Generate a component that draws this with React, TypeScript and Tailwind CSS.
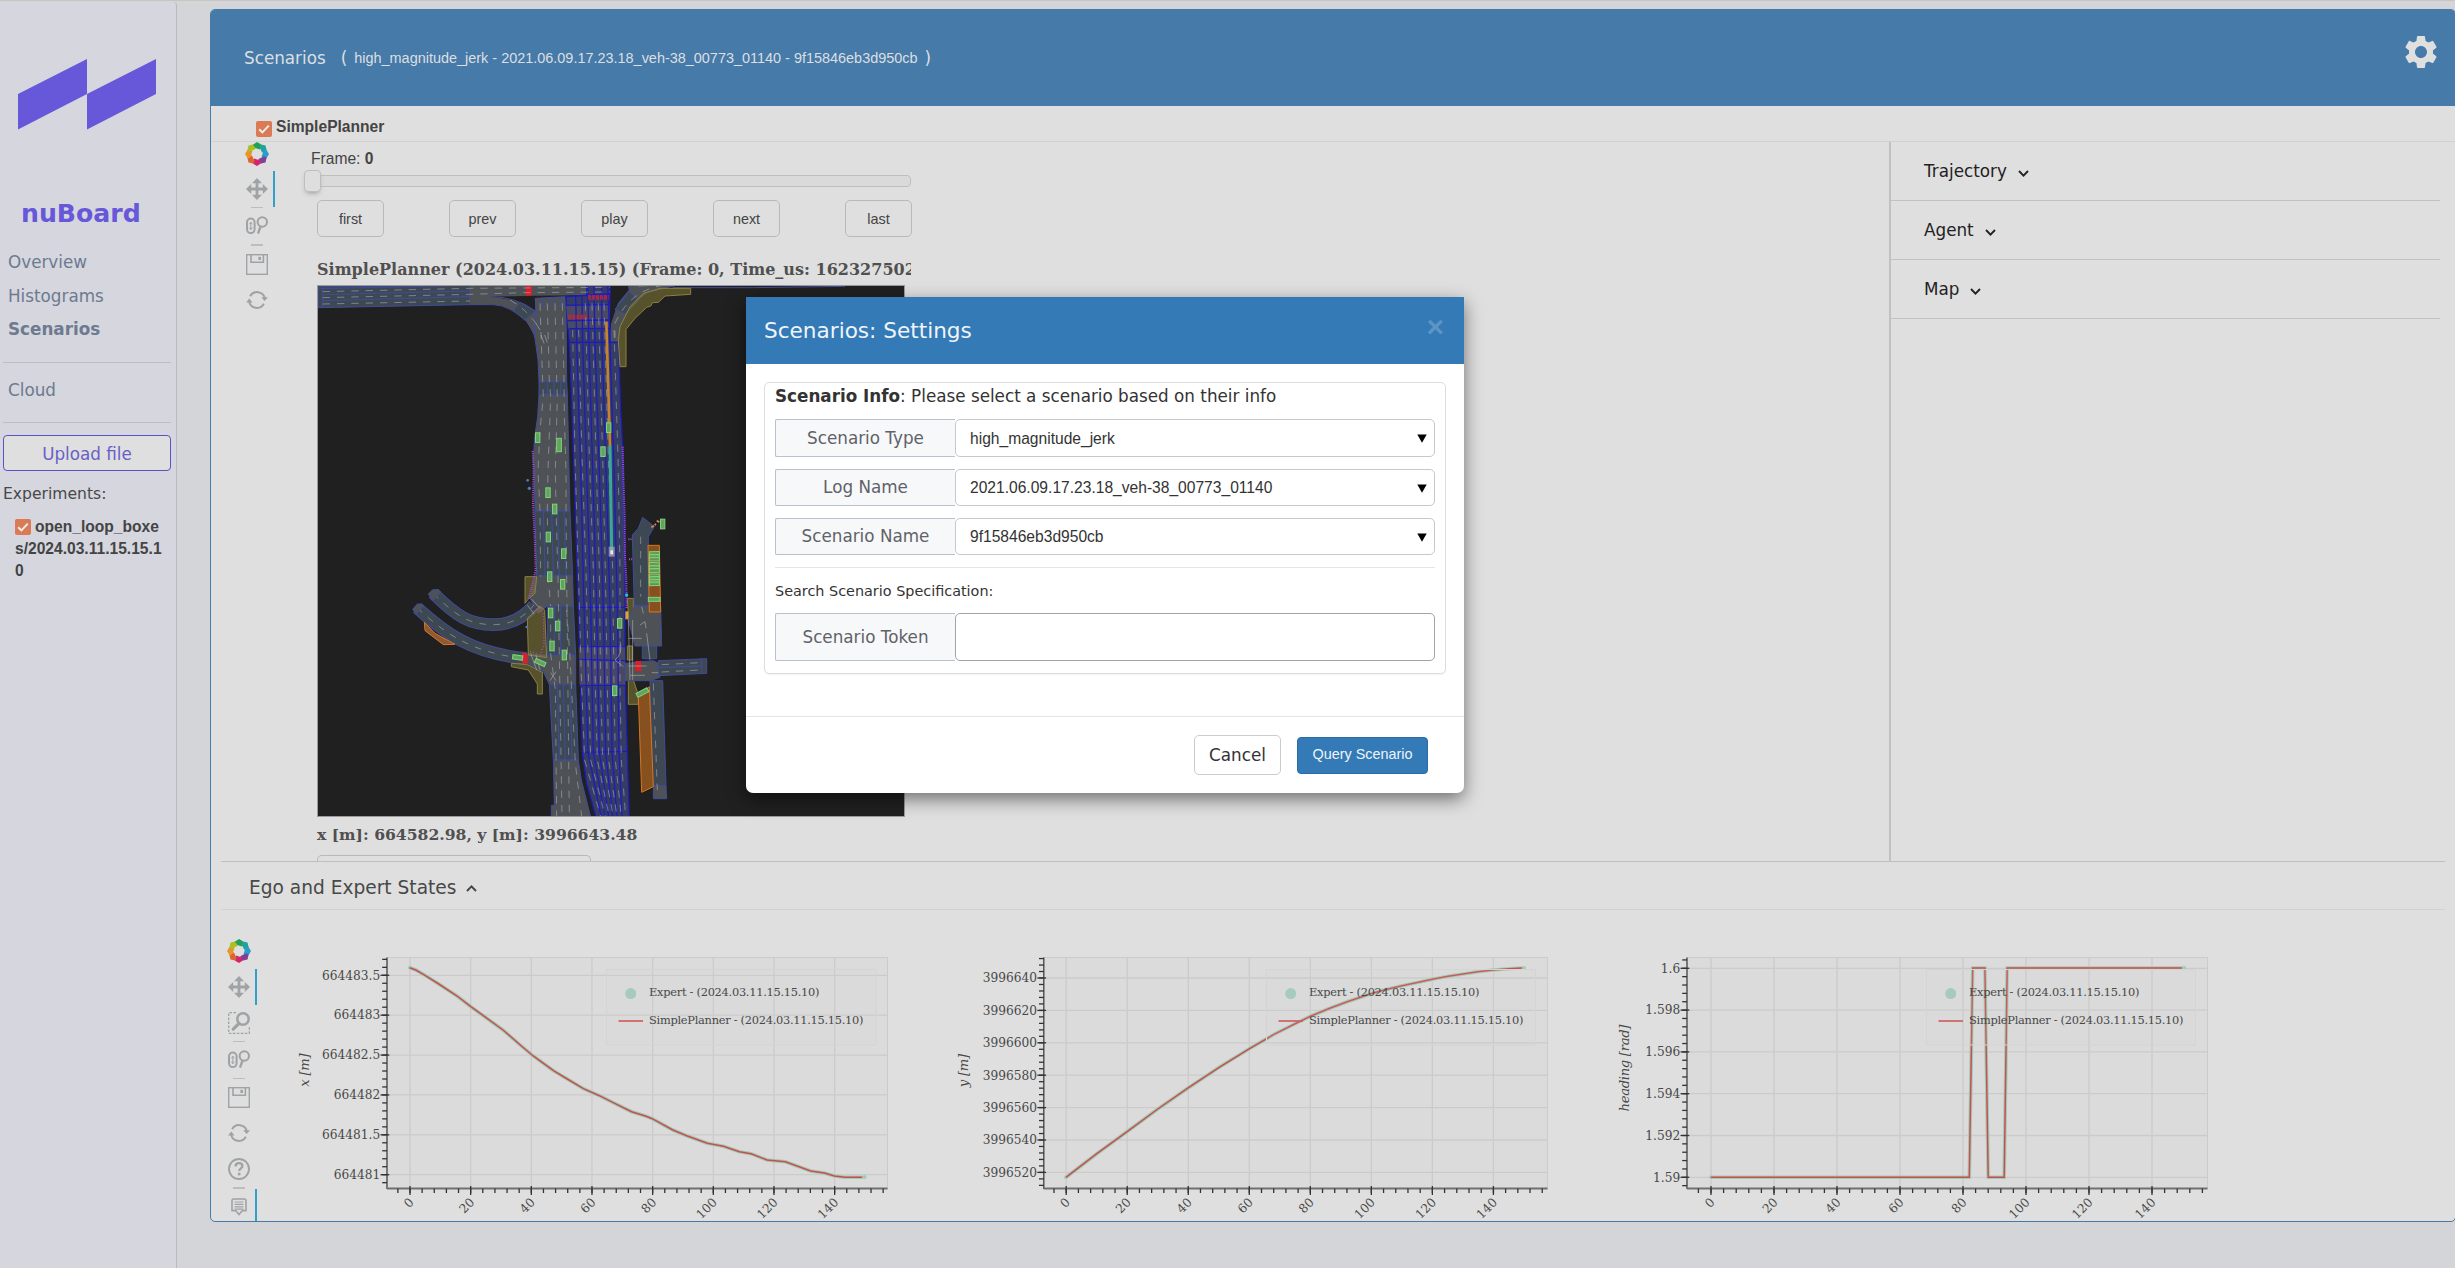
import type { ReactNode } from "react";
import { MdSettings } from "react-icons/md";

const SANS = "font-['DejaVu_Sans',sans-serif]";
const ARIAL = "font-['Liberation_Sans',Arial,sans-serif]";
const SERIF = "font-['DejaVu_Serif',serif]";

/* ---------- Toolbar icons ---------- */

const G = "#9fa3a5";
const LOGO_COLORS = ["#23a055", "#22a29a", "#2b9ccb", "#7d4195", "#d4246f", "#dc6432", "#e8962c", "#a9bf22"];

function polar(deg: number, r: number) {
  const a = ((deg - 90) * Math.PI) / 180;
  return `${(12 + r * Math.cos(a)).toFixed(2)},${(12 + r * Math.sin(a)).toFixed(2)}`;
}

function BokehLogo() {
  return (
    <svg width="24" height="24" viewBox="0 0 24 24">
      {LOGO_COLORS.map((c, i) => {
        const a = i * 45;
        return (
          <polygon
            key={c}
            fill={c}
            points={[polar(a - 27, 10.2), polar(a, 12), polar(a + 22, 10.4), polar(a + 32, 5.4), polar(a - 8, 5.8), polar(a - 24, 7)].join(" ")}
          />
        );
      })}
    </svg>
  );
}

function PanIcon() {
  return (
    <svg width="22" height="22" viewBox="0 0 22 22" fill={G}>
      <path d="M11 0l5 5.2h-3.6v4.4h4.4V6L22 11l-5.2 5v-3.6h-4.4v4.4H16L11 22l-5-5.2h3.6v-4.4H5.2V16L0 11l5.2-5v3.6h4.4V5.2H6z" />
    </svg>
  );
}

function BoxZoomIcon() {
  return (
    <svg width="22" height="22" viewBox="0 0 22 22" fill="none" stroke={G}>
      <path d="M8 .7H.7v20.6h20.6V15" strokeWidth="1.3" strokeDasharray="2.6 1.4" />
      <circle cx="15" cy="7" r="5.7" strokeWidth="2.5" />
      <path d="M11 11.5L5.2 17.2" strokeWidth="3.2" strokeLinecap="round" />
    </svg>
  );
}

function WheelZoomIcon() {
  return (
    <svg width="22" height="20" viewBox="0 0 22 20" fill="none" stroke={G}>
      <rect x="1" y="2.5" width="7.6" height="14.6" rx="3.8" strokeWidth="2" />
      <path d="M4.8 6v8" strokeWidth="1" />
      <path d="M3.2 8.2l1.6-1.8 1.6 1.8M3.2 11.6l1.6 1.8 1.6-1.8" strokeWidth="1" />
      <circle cx="16.3" cy="6" r="4.7" strokeWidth="2" />
      <path d="M14.6 10.4L12 17.6" strokeWidth="2.4" />
    </svg>
  );
}

function SaveIcon() {
  return (
    <svg width="22" height="21" viewBox="0 0 22 21" fill="none" stroke={G}>
      <rect x=".7" y=".7" width="20.6" height="19.6" strokeWidth="1.4" />
      <path d="M5 1v7.2h12.4V1" strokeWidth="1.6" />
      <rect x="12.4" y="2.8" width="2.6" height="3.2" fill={G} stroke="none" />
    </svg>
  );
}

function ResetIcon() {
  return (
    <svg width="22" height="18" viewBox="0 0 22 18" fill="none" stroke={G}>
      <path d="M4.1 5.2A8 8 0 0 1 18.8 7" strokeWidth="2" />
      <path d="M17.9 12.8A8 8 0 0 1 3.2 11" strokeWidth="2" />
      <path d="M15.2 6.2h6.8l-3.4 3.8zM0 11.6h6.6L3.2 7.6z" fill={G} stroke="none" />
    </svg>
  );
}

function HelpIcon() {
  return (
    <svg width="22" height="22" viewBox="0 0 22 22" fill="none" stroke={G}>
      <circle cx="11" cy="11" r="10" strokeWidth="1.9" />
      <path d="M7.6 8.4c0-2 1.5-3.2 3.4-3.2s3.4 1.1 3.4 2.9c0 2.3-3.2 2.3-3.2 5" strokeWidth="2.3" />
      <circle cx="11.2" cy="15.9" r="1.5" fill={G} stroke="none" />
    </svg>
  );
}

function HoverIcon() {
  return (
    <svg width="16" height="18" viewBox="0 0 16 18" fill="none" stroke={G}>
      <path d="M1 2.6Q1 1 2.6 1h10.8Q15 1 15 2.6v10h-3.6L8 16.6l-3.4-4H1z" strokeWidth="1.6" />
      <path d="M3.6 4h8.8M3.6 6.4h8.8M3.6 8.8h8.8M3.6 11.2h8.8" strokeWidth="1.2" />
    </svg>
  );
}

function Tool({ children, active = false }: { children: ReactNode; active?: boolean }) {
  return (
    <div className={`flex h-9 w-[36px] shrink-0 items-center justify-center border-r-2 pl-px ${active ? "border-[#33a0cb]" : "border-transparent"}`}>
      {children}
    </div>
  );
}

function Sep({ thick = false }: { thick?: boolean }) {
  return <div className={`ml-[12px] w-3 shrink-0 bg-[#bdbdbd] ${thick ? "h-[2px]" : "h-px"}`} />;
}

/* ---------- Shared bits ---------- */

function Check() {
  return (
    <span className="flex h-4 w-4 items-center justify-center rounded-[2px] bg-[#da7b55]">
      <svg width="12" height="12" viewBox="0 0 12 12" fill="none" stroke="#eeeeee" strokeWidth="2">
        <path d="M1.2 6.2l3.2 3.2L10.8 2.6" />
      </svg>
    </span>
  );
}

function Chevron({ up = false, color = "#222" }: { up?: boolean; color?: string }) {
  return (
    <svg width="11" height="7" viewBox="0 0 11 7" fill="none" stroke={color} strokeWidth="1.9">
      {up ? <path d="M1 6l4.5-4.6L10 6" /> : <path d="M1 1l4.5 4.6L10 1" />}
    </svg>
  );
}

/* ---------- Sidebar ---------- */

function Sidebar() {
  return (
    <aside className="flex w-[177px] shrink-0 flex-col rounded-tr-[4px] border-r border-[#b9b9be] bg-[#d5d6de]">
      <svg width="176" height="185" viewBox="0 2 176 185" fill="#6757d9" className="shrink-0">
        <path d="M18 94L87 59V94L18 129.5zM87 94L156 59V94L87 129.5z" />
      </svg>
      <h1 className={`${SANS} h-[52px] pl-[21px] text-[25.2px] leading-[54px] font-bold text-[#6757d9]`}>nuBoard</h1>
      <nav className={`${SANS} flex flex-col pt-[7px] pl-[8px] text-[16.8px] leading-[33.6px] text-[#6d7a90]`}>
        <span>Overview</span>
        <span>Histograms</span>
        <span className="font-bold">Scenarios</span>
      </nav>
      <hr className="mt-[15px] mr-[5px] ml-[3px] border-[#bebebe]" />
      <div className={`${SANS} h-[59px] pl-[8px] text-[16.8px] leading-[54px] text-[#6d7a90]`}>Cloud</div>
      <hr className="mr-[5px] ml-[3px] border-[#bebebe]" />
      <button className={`${SANS} mt-[12px] mr-[5px] ml-[3px] h-[36px] rounded-[4px] border border-[#5b50c6] bg-[#dfdfdf] pt-[2px] text-[16.8px] leading-[32px] text-[#695fc8]`}>
        Upload file
      </button>
      <div className={`${SANS} h-[45px] pl-[3px] text-[15.6px] leading-[47px] text-[#484848]`}>Experiments:</div>
      <div className={`${ARIAL} flex flex-col pl-[15px] text-[15.6px] leading-[22.2px] font-bold text-[#444]`}>
        <span className="flex gap-1">
          <span className="pt-[3px]">
            <Check />
          </span>
          open_loop_boxe
        </span>
        <span>s/2024.03.11.15.15.1</span>
        <span>0</span>
      </div>
    </aside>
  );
}

/* ---------- Scenario map ---------- */

const SLATE = "#3e4852";
const GRAY = "#4e5256";
const EDGE = "#3f4c9c";

const LEFT_SECTIONS: [string, string][] = [
  ["678,122 676,85 765,80 768,120 770,335 687,335 684,270 675,205", GRAY],
  ["687,335 770,335 772,373 687,373", SLATE],
  ["687,373 772,373 780,723 675,723 671,560 673,510 683,440", GRAY],
  ["675,723 780,723 788,918 680,918", SLATE],
  ["680,918 788,918 790,1008 712,1008 685,1030 660,985", GRAY],
  ["712,1008 790,1008 797,1156 712,1156", SLATE],
  ["712,1156 797,1156 797,1243 718,1243 700,1205 650,1180 650,1152", GRAY],
  ["718,1243 797,1243 805,1470 730,1470", SLATE],
  ["730,1470 805,1470 814,1530 842,1641 724,1641 724,1606 733,1606", GRAY],
];

const WHITE_LANES = [
  "38,65 480,55 900,52",
  "38,83 480,73 640,68 900,66",
  "38,102 480,93",
  "690,100 698,335 700,380 690,480 684,600 690,720 692,920",
  "712,100 718,335 722,380 714,600 712,720 714,920 722,1008",
  "735,100 740,335 742,380 736,600 738,720 744,920 756,1640",
  "757,100 762,335 763,440 768,600 768,720 770,920 778,1640",
  "722,1020 722,1150 736,1260 740,1640",
  "770,1020 780,1160 796,1480 815,1640",
  "788,180 795,560 805,900 815,1250 824,1470 872,1640",
  "806,180 816,560 828,900 836,1250 842,1470 886,1640",
  "826,100 838,560 850,900 856,1250 862,1470 898,1640",
  "846,100 858,560 868,900 872,1250 878,1470 910,1640",
  "865,100 878,560 886,900 892,1250 896,1470 921,1640",
  "882,100 895,560 908,900 912,1250 916,1470 934,1640",
  "912,180 924,560 930,900 930,1250 934,1470 947,1640",
];

const BLUE_LINES = [
  "797,80 800,217 812,600 822,1012 834,1447 874,1641",
  "816,80 818,217 830,600 842,1012 850,1447 885,1641",
  "833,45 837,217 848,600 860,1012 868,1447 896,1641",
  "852,45 855,217 868,600 880,1012 887,1447 908,1641",
  "875,45 876,217 888,600 900,1012 906,1447 921,1641",
  "893,45 900,217 912,600 922,1012 927,1447 936,1641",
  "768,80 900,72",
  "768,106 900,104",
  "772,152 898,150",
  "778,176 900,175",
  "778,217 925,217",
  "803,1012 945,1012",
  "805,1130 945,1130",
  "806,1168 945,1172",
  "809,1246 946,1246",
  "816,1447 952,1444",
];

const CARS = [
  [683, 503], [714, 668], [734, 717], [715, 801], [761, 851], [719, 920], [758, 943], [896, 473], [879, 545], [1058, 762],
  [722, 1029], [743, 1068], [726, 1128], [763, 1155], [929, 1060], [914, 1262],
];

function MapView() {
  return (
    <svg width="588" height="532" viewBox="21 45 1764 1596" className="block overflow-hidden">
      <rect x="21" y="45" width="1764" height="1596" fill="#202020" />
      <g stroke={EDGE} strokeWidth="3" fill={SLATE}>
        <polygon points="24,50 480,45 480,104 24,113" />
        <path d="M38 45V112M38 74L480 63M38 92L480 80" fill="none" />
        <path d="M24 56L480 46" fill="none" />
        <path d="M480 45H900V75L664 77Q620 78 540 80Q600 84 640 104L678 124V205L650 155Q600 104 550 104H480z" fill={GRAY} stroke="none" />
        <path d="M480 104H550Q600 106 650 155Q672 185 675 205M540 80Q620 80 678 124L676 85" fill="none" />
        <polygon points="630,97 676,124 645,150 610,122" />
        {LEFT_SECTIONS.map(([p, f]) => (
          <polygon key={p} points={p} fill={f} />
        ))}
        <path d="M700 85V110M718 85V110M735 85V110M752 85V110M712 335V373M732 335V373M752 335V373M700 723L705 918M725 723L730 918M743 723L748 918M762 723L768 918M734 1008V1156M752 1008V1156M742 1243L748 1470M760 1243L766 1470M780 1243L786 1470" fill="none" />
        <polygon points="900,215 905,160 925,100 958,60 955,45 1100,45 1010,68 960,110 930,170 925,217" fill={GRAY} />
        <polygon points="958,64 985,92 945,132 915,118" />
        <path d="M1090 45V53H1330L1605 49" fill="none" />
      </g>

      {/* Route corridor */}
      <g stroke="#1c1cbc" strokeWidth="3.8">
        <polygon
          fill="#363d64"
          points="768,80 830,76 830,45 900,45 900,72 898,150 900,217 926,217 932,420 938,530 945,870 945,1130 946,1246 952,1447 958,1641 858,1641 830,1540 817,1447 805,1010 795,700 785,400 778,217 770,130"
        />
        <polygon points="768,106 898,104 898,175 775,176" fill="#4a4a60" stroke="none" />
        <polygon points="806,1130 945,1130 946,1246 809,1246" fill="#484863" stroke="none" />
        {BLUE_LINES.map((p) => (
          <polyline key={p} points={p} fill="none" />
        ))}
      </g>
      <g stroke="#d0203c" strokeWidth="14" strokeOpacity=".75" strokeDasharray="9 3">
        <path d="M834 82H896M775 141H831" />
      </g>
      <rect x="647" y="46" width="18" height="31" fill="#d8202a" />

      {/* Left access roads */}
      <g fill="none">
        <path d="M370 970C440 1040 480 1064 550 1064C600 1064 640 1045 672 1005" stroke={EDGE} strokeWidth="38" />
        <path d="M370 970C440 1040 480 1064 550 1064C600 1064 640 1045 672 1005" stroke={SLATE} strokeWidth="32" />
        <path d="M322 1014C400 1085 480 1150 650 1166" stroke={EDGE} strokeWidth="38" />
        <path d="M322 1014C400 1085 480 1150 650 1166" stroke={SLATE} strokeWidth="32" />
        <path d="M370 970C440 1040 480 1064 550 1064C600 1064 640 1045 672 1005M322 1014C400 1085 480 1150 650 1166" stroke="#b5b8b6" strokeOpacity=".8" strokeWidth="2" strokeDasharray="20 22" />
      </g>
      <g fill={GRAY} stroke={EDGE} strokeWidth="3">
        <path d="M355 972L368 959H386L392 966L368 992z" />
        <path d="M308 1018L322 1002H336L342 1008L318 1032z" />
      </g>

      {/* Walkways and car parks */}
      <g fill="#7d7335" fillOpacity=".6" stroke="#8a8240" strokeWidth="3">
        <path d="M925 210L930 170L960 110L1000 70L1050 55H1142V73L1065 78L1045 97L1028 98L1022 108L1010 112L975 145L948 178V290H930z" />
        <path d="M645 920H680L675 970L652 990L645 1000z" />
        <path d="M652 1045L690 1008L704 1020L710 1163L655 1155z" />
        <path d="M604 1180L650 1183L697 1207V1272H682V1242L655 1200L604 1190z" />
        <path d="M952 985H970V1048H956zM952 1128H967V1170H952zM955 1230H970L985 1275V1303H955z" />
      </g>
      <path d="M343 1057L375 1090L435 1123L400 1124L345 1082z" fill="#8e5a33" stroke="#d8761f" strokeWidth="3" />

      {/* Right access roads */}
      <g stroke={EDGE} strokeWidth="3" fill={SLATE}>
        <polygon points="998,742 1033,770 1015,800 1015,1008 973,1008 967,795 985,775" />
        <polygon points="973,1008 1052,1008 1055,1128 975,1128 955,1050" fill={GRAY} />
        <polygon points="997,1128 1040,1128 1040,1166 997,1166" />
        <polygon points="946,1180 1030,1172 1045,1180 1050,1222 1020,1232 946,1232" fill={GRAY} />
        <polygon points="1045,1172 1190,1166 1190,1210 1045,1217" />
        <path d="M1045 1193L1175 1188M1175 1166V1212" />
        <polygon points="1020,1232 1058,1232 1068,1547 1028,1547" />
        <polygon points="1030,1547 1068,1547 1070,1586 1030,1586" fill={GRAY} />
      </g>
      <g fill="#86501f" stroke="#d8761f" strokeWidth="3">
        <path d="M1014 826H1048L1052 1026H1018z" />
        <path d="M985 1278L1018 1250L1030 1550L995 1567z" />
      </g>
      <g fill="#d8202a">
        <path d="M637 1147L653 1152V1182L636 1178zM976 1173H994V1204H976z" />
      </g>

      {/* Lane dashes */}
      <g fill="none" stroke="#b9b9b9" strokeOpacity=".72" strokeWidth="2.2" strokeDasharray="22 21">
        {WHITE_LANES.map((p) => (
          <polyline key={p} points={p} />
        ))}
        <path d="M600 90Q660 125 690 180M1060 46Q960 60 915 160V210M992 800V980M1055 1184L1170 1178M1055 1206L1170 1200M1030 1240L1042 1560" />
      </g>
      <g fill="none" stroke="#b9b9b9" strokeOpacity=".7" strokeWidth="2.4">
        <path d="M652 1005L672 1032M665 988L690 1015M678 1155L690 1200M662 1150L680 1200M955 1048L960 1230M968 1050V1230M955 1105H995M955 1188H1010M960 1216H1005M930 1115Q940 1150 915 1170L940 1190M720 1232L738 1205M722 1208L738 1232M995 1010L1000 1030M990 1065L1005 1055L1008 1075M1010 1090L1020 1170M1025 1208H1045" />
        <path d="M693 195L702 220M704 195L712 218M678 160L690 180M985 48L1030 46" />
      </g>

      {/* Tracked objects */}
      <g fill="none" stroke="#a94fd6" strokeWidth="6" strokeDasharray="3 3.5">
        <path d="M668 543L671 600L669 700L674 800L677 900L668 940L656 985" />
        <path d="M938 530L940 620L944 740L945 860L949 930L950 1015" />
        <path d="M672 1025L690 1010L700 1035L702 1120L690 1160M660 1145L680 1150" strokeWidth="4" strokeDasharray="3 6" />
        <path d="M955 808H968M957 868H968" />
      </g>
      <g fill="#4a7ccc">
        <circle cx="653" cy="631" r="4" />
        <circle cx="658" cy="655" r="5" />
        <circle cx="650" cy="1071" r="4" />
        <circle cx="950" cy="975" r="5" fill="#22bfd0" />
        <rect x="946" y="1024" width="9" height="24" fill="#d8a43a" />
        <path d="M1024 772l8-5M1040 752l8 4M1034 762l4 3" stroke="#e0905a" strokeWidth="5" />
      </g>
      <path d="M889 155L900 530" stroke="#c5832e" strokeWidth="8" />
      <path d="M900 527L905 842" stroke="#3aa99c" strokeWidth="9" />
      <rect x="896" y="830" width="18" height="30" fill="#a8a8a8" fillOpacity=".75" />
      <rect x="901" y="841" width="8" height="12" fill="#e8e8e8" />
      <g fill="#63a35f" stroke="#7fd67a" strokeWidth="3">
        {CARS.map(([x, y]) => (
          <rect key={`${x}-${y}`} x={x - 6.5} y={y - 14.5} width="13" height="29" />
        ))}
        <rect x="740" y="505" width="14" height="40" />
        <rect x="608" y="1156" width="30" height="13" transform="rotate(8 623 1162)" />
        <rect x="675" y="1171" width="32" height="13" transform="rotate(24 691 1177)" />
        <rect x="979" y="1261" width="37" height="13" transform="rotate(-28 998 1268)" />
        {[845, 853, 862, 878, 887, 896, 912, 920, 928, 936].map((y) => (
          <rect key={y} x="1018" y={y} width="30" height="11" fillOpacity=".8" transform={`rotate(${(y % 5) - 2} 1033 ${y})`} />
        ))}
        <rect x="1015" y="982" width="35" height="12" />
      </g>
      <rect x="22.5" y="46.5" width="1761" height="1593" fill="none" stroke="#9a9a9a" strokeWidth="3" />
    </svg>
  );
}

/* ---------- Charts ---------- */

type ChartProps = {
  originX: number;
  left: number;
  right: number;
  x0: number;
  xStep: number;
  yTicks: string[];
  yTop: number;
  yStep: number;
  minorFrom: number;
  label: string;
  labelX: number;
  labelY: number;
  labelLen: number;
  legendX: number;
  legendW: number;
  points: string;
  end: [number, number];
};

const TOP = 957.5;
const BOTTOM = 1188.5;

function Chart(p: ChartProps) {
  const xTicks = [0, 20, 40, 60, 80, 100, 120, 140];
  const minorX: number[] = [];
  for (let v = p.x0 - p.xStep / 5; v < p.right; v += p.xStep / 5) minorX.push(v);
  const minorY: number[] = [];
  for (let v = p.yTop - p.minorFrom * (p.yStep / 5); v < BOTTOM - 1; v += p.yStep / 5) minorY.push(v);
  return (
    <svg width="660" height="291" viewBox={`${p.originX} 930 660 291`} className="block shrink-0">
      <rect x={p.left} y={TOP} width={p.right - p.left} height={BOTTOM - TOP} fill="#dbdbdb" stroke="#cbcbcb" />
      <g stroke="#cbcbcb" strokeWidth="1.3">
        {xTicks.map((t, i) => (
          <path key={t} d={`M${p.x0 + i * p.xStep} ${TOP}V${BOTTOM}`} />
        ))}
        {p.yTicks.map((t, i) => (
          <path key={t} d={`M${p.left} ${p.yTop + i * p.yStep}H${p.right}`} />
        ))}
      </g>
      <polyline points={p.points} fill="none" stroke="#a3c9b8" strokeWidth="3.6" strokeLinecap="round" />
      <circle cx={p.end[0]} cy={p.end[1]} r="2" fill="#a3c9b8" />
      <polyline points={p.points} fill="none" stroke="#c8504c" strokeWidth="1.5" />
      <g stroke="#333" strokeWidth="1.3">
        <path d={`M${p.left} ${TOP}V${BOTTOM + 0.5}`} stroke="#444" />
        <path d={`M${p.left} ${BOTTOM}H${p.right}`} stroke="#707070" strokeWidth="1.8" />
        {minorX.map((v) => (
          <path key={v} d={`M${v} ${BOTTOM}v4.5`} />
        ))}
        {minorY.map((v) => (
          <path key={v} d={`M${p.left} ${v}h-4.8`} />
        ))}
        {xTicks.map((t, i) => (
          <path key={t} d={`M${p.x0 + i * p.xStep} ${BOTTOM - 2.5}v9`} />
        ))}
        {p.yTicks.map((t, i) => (
          <path key={t} d={`M${p.left - 6.5} ${p.yTop + i * p.yStep}h8.8`} />
        ))}
      </g>
      <g className={SERIF} fontSize="12.2" fill="#484848">
        {p.yTicks.map((t, i) => (
          <text key={t} x={p.left - 6.8} y={p.yTop + i * p.yStep + 4.3} textAnchor="end">
            {t}
          </text>
        ))}
        {xTicks.map((t, i) => {
          const x = p.x0 + i * p.xStep + 4.5;
          return (
            <text key={t} x={x} y="1203" textAnchor="end" transform={`rotate(-45 ${x} 1203)`}>
              {t}
            </text>
          );
        })}
        <text
          x={p.labelX}
          y={p.labelY}
          textAnchor="middle"
          fontSize="13.2"
          fontStyle="italic"
          textLength={p.labelLen}
          transform={`rotate(-90 ${p.labelX} ${p.labelY})`}
        >
          {p.label}
        </text>
      </g>
      <rect x={p.legendX} y="969.5" width={p.legendW} height="75.5" fill="#dcdcdc" fillOpacity=".1" stroke="#d4d4d4" />
      <circle cx={p.legendX + 24.2} cy="993.6" r="5.5" fill="#a6cabb" />
      <path d={`M${p.legendX + 12} 1021h24.5`} stroke="#cd5f5d" strokeWidth="1.7" />
      <g className={SERIF} fontSize="11.4" fill="#484848">
        <text x={p.legendX + 42.5} y="996" textLength="170.5">
          Expert - (2024.03.11.15.15.10)
        </text>
        <text x={p.legendX + 42.5} y="1024" textLength="214.5">
          SimplePlanner - (2024.03.11.15.15.10)
        </text>
      </g>
    </svg>
  );
}

/* Converts pairs in chart units to page pixels. */
function scaled(pairs: number[][], ox: number, sx: number, oy: number) {
  return pairs.map(([x, y]) => `${(ox + x / sx).toFixed(1)},${(oy + y / 3).toFixed(1)}`).join(" ");
}

const X_POINTS = scaled(
  [
    [457, 353], [470, 360], [490, 376], [520, 402], [560, 438], [590, 470], [620, 500], [660, 540], [700, 588], [725, 617], [745, 637],
    [770, 662], [800, 687], [835, 716], [870, 737], [900, 758], [940, 785], [970, 798], [985, 806], [1030, 840], [1060, 857], [1105, 880],
    [1140, 889], [1175, 905], [1200, 911], [1235, 930], [1275, 935], [1330, 963], [1360, 969], [1382, 978], [1405, 982], [1442, 982],
  ],
  200,
  2.178,
  850,
);
const Y_POINTS = scaled(
  [
    [347, 742], [420, 671], [493, 604], [565, 537], [638, 473], [711, 412], [784, 355], [840, 314], [890, 282], [929, 258], [975, 234],
    [1020, 213], [1075, 190], [1110, 178], [1145, 167], [1190, 155], [1220, 147], [1255, 139], [1290, 132], [1325, 125], [1362, 120],
    [1400, 116], [1430, 114],
  ],
  920,
  2.376,
  930,
);
const H_POINTS = scaled(
  [[311, 742], [925, 742], [933, 114], [962, 114], [970, 742], [1008, 742], [1015, 114], [1430, 114]],
  1580,
  2.376,
  930,
);

/* ---------- Panels ---------- */

function PlayerButton({ children }: { children: ReactNode }) {
  return (
    <button className={`${ARIAL} h-[37px] w-[67px] rounded-[5px] border border-[#b9b9b9] pt-px text-[14.4px] leading-[35px] text-[#444]`}>{children}</button>
  );
}

function SimulationPane() {
  return (
    <div className="flex min-w-0 flex-1">
      <div className="flex w-[96px] shrink-0 flex-col pl-[19px]">
        <div className="mb-[5px] flex h-6 pl-[6px]">
          <BokehLogo />
        </div>
        <Tool active>
          <PanIcon />
        </Tool>
        <Sep />
        <Tool>
          <WheelZoomIcon />
        </Tool>
        <Sep thick />
        <Tool>
          <SaveIcon />
        </Tool>
        <Tool>
          <ResetIcon />
        </Tool>
      </div>
      <div className="flex w-[596px] flex-col">
        <div className={`${ARIAL} -ml-[5px] h-[33px] pt-[5px] text-[15.6px] leading-[23px] text-[#444]`}>
          Frame: <b>0</b>
        </div>
        <div className="relative -ml-[5px] h-[12px] w-[600px] rounded-[4px] border border-[#bfbfbf] bg-[#dadada]">
          <span className="absolute -top-[6px] -left-[8px] h-[22px] w-[17px] rounded-[4px] border border-[#bebebe] bg-[#dedede] shadow-[0_3px_5px_-2px_#999]" />
        </div>
        <div className="mt-[13px] ml-px flex justify-between">
          <PlayerButton>first</PlayerButton>
          <PlayerButton>prev</PlayerButton>
          <PlayerButton>play</PlayerButton>
          <PlayerButton>next</PlayerButton>
          <PlayerButton>last</PlayerButton>
        </div>
        <div className={`${SERIF} mt-[12px] h-[36px] w-[595px] overflow-hidden pl-[1px] text-[16.03px] leading-[41px] font-bold whitespace-nowrap text-[#505050]`}>
          SimplePlanner (2024.03.11.15.15) (Frame: 0, Time_us: 162327502
        </div>
        <div className="ml-px">
          <MapView />
        </div>
        <div className={`${SERIF} h-[38px] pl-[1px] text-[15.6px] leading-[36px] font-bold whitespace-nowrap text-[#505050]`}>
          x [m]: 664582.98, y [m]: 3996643.48
        </div>
        <div className="ml-px h-[6px] w-[274px] rounded-t-[5px] border border-b-0 border-[#b9b9b9]" />
      </div>
    </div>
  );
}

function OptionRow({ children }: { children: ReactNode }) {
  return (
    <div className={`${SANS} mr-[5px] flex h-[59px] items-center gap-[11px] border-b border-[#c1c1c1] pt-[2px] pl-[33px] text-[16.8px] text-[#222]`}>
      {children}
      <span className="pt-[3px]">
        <Chevron />
      </span>
    </div>
  );
}

function StatesPane() {
  return (
    <div className="mt-[20px] flex h-[291px] overflow-hidden">
      <div className="flex w-[66px] shrink-0 flex-col pt-[9px] pl-[10px]">
        <div className="mb-[6px] flex h-6 shrink-0 pl-[6px]">
          <BokehLogo />
        </div>
        <Tool active>
          <PanIcon />
        </Tool>
        <Tool>
          <BoxZoomIcon />
        </Tool>
        <Sep />
        <Tool>
          <WheelZoomIcon />
        </Tool>
        <Sep />
        <Tool>
          <SaveIcon />
        </Tool>
        <Tool>
          <ResetIcon />
        </Tool>
        <Tool>
          <HelpIcon />
        </Tool>
        <Sep thick />
        <Tool active>
          <HoverIcon />
        </Tool>
      </div>
      <Chart
        originX={277} left={387} right={887.5} x0={410} xStep={60.66}
        yTicks={["664483.5", "664483", "664482.5", "664482", "664481.5", "664481"]}
        yTop={975.3} yStep={39.88} minorFrom={2}
        label="x [m]" labelX={309} labelY={1070} labelLen={33.5}
        legendX={606.5} legendW={269.5} points={X_POINTS} end={[864.5, 1177]}
      />
      <Chart
        originX={937} left={1043.8} right={1547.5} x0={1066.2} xStep={61.03}
        yTicks={["3996640", "3996620", "3996600", "3996580", "3996560", "3996540", "3996520"]}
        yTop={978} yStep={32.4} minorFrom={3}
        label="y [m]" labelX={968} labelY={1070.5} labelLen={33.5}
        legendX={1266.5} legendW={269} points={Y_POINTS} end={[1524, 968]}
      />
      <Chart
        originX={1597} left={1687} right={2207.5} x0={1711} xStep={63}
        yTicks={["1.6", "1.598", "1.596", "1.594", "1.592", "1.59"]}
        yTop={968.3} yStep={41.8} minorFrom={1}
        label="heading [rad]" labelX={1628.5} labelY={1068} labelLen={87}
        legendX={1926.5} legendW={269} points={H_POINTS} end={[2184, 968]}
      />
    </div>
  );
}

/* ---------- Settings dialog ---------- */

function Field({ label, value, size }: { label: string; value?: string; size: string }) {
  return (
    <div className={`flex ${size}`}>
      <div className={`${SANS} flex w-[180px] items-center justify-center rounded-l-[2px] border border-r-0 border-[#b9c1cd] bg-[#f7f8fa] pt-px text-[16.8px] text-[#5f6267]`}>
        {label}
      </div>
      {value ? (
        <div className={`${ARIAL} flex flex-1 items-center justify-between rounded-[5px] border border-[#c8c8c8] bg-white pt-px pr-[7px] pl-[14px] text-[15.6px] text-[#333]`}>
          <span>{value}</span>
          <svg width="10" height="9" viewBox="0 0 10 9">
            <path d="M.3.5h9.4L5 8.8z" fill="#000" />
          </svg>
        </div>
      ) : (
        <div className="flex-1 rounded-[5px] border border-[#a3a3a3] bg-white" />
      )}
    </div>
  );
}

function SettingsDialog() {
  return (
    <div className={`${SANS} absolute top-[297px] left-[746px] flex h-[496px] w-[718px] flex-col rounded-b-[7px] bg-white text-[#333] shadow-[0_6px_18px_rgba(0,0,0,0.5)]`}>
      <div className="flex h-[67px] items-start justify-between bg-[#337ab7] pr-[20px] pl-[18px]">
        <h2 className="text-[21.6px] leading-[68px] text-[#f0f4f8]">Scenarios: Settings</h2>
        <span className={`${ARIAL} text-[30px] leading-[59px] font-bold text-[#5c95c5]`}>×</span>
      </div>
      <div className="flex-1 px-[18px] pt-[18px]">
        <div className="flex h-[292px] flex-col rounded-[5px] border border-[#dddddd] px-[10px] shadow-[0_1px_1px_rgba(0,0,0,0.05)]">
          <p className="h-[36px] text-[16.8px] leading-[26px]">
            <b>Scenario Info</b>: Please select a scenario based on their info
          </p>
          <div className="flex flex-col gap-[12px]">
            <Field label="Scenario Type" value="high_magnitude_jerk" size="h-[38px]" />
            <Field label="Log Name" value="2021.06.09.17.23.18_veh-38_00773_01140" size="h-[37px]" />
            <Field label="Scenario Name" value="9f15846eb3d950cb" size="h-[37px]" />
          </div>
          <hr className="mt-[12px] border-[#e5e5e5]" />
          <p className="h-[45px] text-[14.4px] leading-[46px]">Search Scenario Specification:</p>
          <Field label="Scenario Token" size="h-[48px]" />
        </div>
      </div>
      <div className="flex h-[77px] items-center justify-end gap-[16px] border-t border-[#e5e5e5] pr-[36px]">
        <button className="h-[40px] w-[87px] rounded-[5px] border border-[#cccccc] bg-white pt-px text-[16.8px]">Cancel</button>
        <button className={`${ARIAL} h-[37px] w-[131px] rounded-[4px] border border-[#2e6da4] bg-[#337ab7] text-[14.4px] text-[#f0f4f8]`}>
          Query Scenario
        </button>
      </div>
    </div>
  );
}

/* ---------- Page ---------- */

export default function App() {
  return (
    <div className="relative flex h-[1268px] w-[2455px] flex-col overflow-hidden bg-[#d4d5d9]">
      <div className="h-px w-full shrink-0 bg-[#cac4c1]" />
      <div className="flex flex-1 pt-px">
        <Sidebar />
        <main className="mt-[7px] -mr-px ml-[33px] flex h-[1213px] flex-1 flex-col overflow-hidden rounded-[5px] border border-[#467aa8] bg-[#dfdfdf]">
          <header className="flex h-[96px] shrink-0 justify-between bg-[#467aa8] pr-[14px] pl-[33px] text-[#dcdfe2]">
            <div className={`${SANS} flex items-center text-[16.8px] leading-[24px] whitespace-pre`}>
              <span>Scenarios</span>
              <span className="pl-[15px]">(</span>
              <span className={`${ARIAL} px-[7px] text-[14.45px]`}>high_magnitude_jerk - 2021.06.09.17.23.18_veh-38_00773_01140 - 9f15846eb3d950cb</span>
              <span>)</span>
            </div>
            <MdSettings className="mt-[22px] h-[40px] w-[40px] text-[#dfdfdf]" />
          </header>
          <div className={`${ARIAL} flex h-[36px] shrink-0 gap-[4px] border-b border-[#d1d1d1] pl-[45px] text-[15.6px] leading-[42px] font-bold text-[#444]`}>
            <span className="pt-[15px]">
              <Check />
            </span>
            SimplePlanner
          </div>
          <div className="mr-[10px] ml-[10px] flex h-[720px] shrink-0 border-b border-[#bfbfbf]">
            <div className="-ml-px flex h-[719px] flex-1 overflow-hidden">
              <SimulationPane />
            </div>
            <div className="h-[719px] w-[556px] border-l-2 border-[#c1c1c1]">
              <OptionRow>Trajectory</OptionRow>
              <OptionRow>Agent</OptionRow>
              <OptionRow>Map</OptionRow>
            </div>
          </div>
          <div className={`${SANS} mr-[10px] ml-[10px] flex h-[48px] shrink-0 items-center gap-[10px] border-b border-[#d1d1d1] pt-[5px] pl-[28px] text-[18.6px] text-[#484848]`}>
            Ego and Expert States
            <Chevron up color="#444" />
          </div>
          <StatesPane />
        </main>
      </div>
      <SettingsDialog />
    </div>
  );
}
